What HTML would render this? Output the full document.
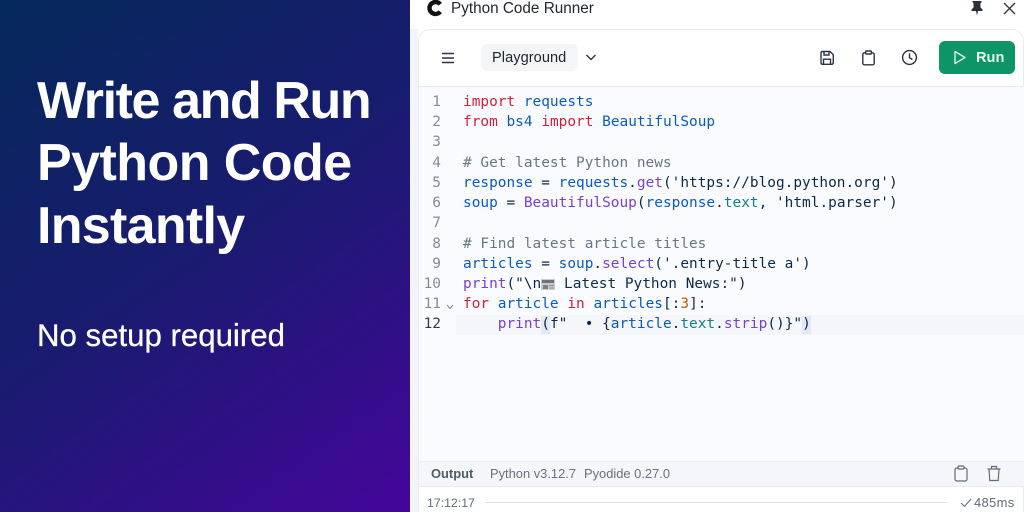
<!DOCTYPE html>
<html><head><meta charset="utf-8">
<style>
html,body{margin:0;padding:0;width:1024px;height:512px;overflow:hidden;background:#fff}
*{box-sizing:border-box}
#root{position:relative;width:1024px;height:512px;overflow:hidden}
.abs,.t,.c,.n{position:absolute;white-space:pre}
body{font-family:"Liberation Sans",sans-serif}
#left{position:absolute;left:0;top:0;width:410px;height:512px;background:linear-gradient(145deg,#04285a 0%,#1a1b70 50%,#44059b 100%)}
.h{position:absolute;left:37px;color:#fff;font-weight:700;font-size:52px;line-height:62px;letter-spacing:-.55px;white-space:pre}
.c{left:463px;font-family:"DejaVu Sans Mono",monospace;font-size:14.44px;line-height:20px;color:#0b2a4a}
.n{width:26px;left:415px;text-align:right;font-family:"DejaVu Sans Mono",monospace;font-size:14.44px;line-height:20px;color:#858b93}
.r{color:#d0203a}.b{color:#0a5ac2}.p{color:#7a3fd1}.te{color:#0f7f86}.o{color:#b5600b}
.f{font-size:12.9px;line-height:16px;color:#667280}
</style></head><body><div id="root">
<div id="left"></div>
<div class="h" style="top:70px;letter-spacing:-1.4px">Write and Run</div>
<div class="h" style="top:132px">Python Code</div>
<div class="h" style="top:195px;letter-spacing:-.7px">Instantly</div>
<div class="t" style="left:37px;top:318px;color:#fff;font-size:31.2px;line-height:36px;-webkit-text-stroke:.3px #fff">No setup required</div>

<div class="abs" style="left:410px;top:0;width:8px;height:512px;background:#f3f4f8"></div>
<div class="abs" style="left:410px;top:0;width:614px;height:29px;background:#fff"></div>
<svg class="abs" style="left:426px;top:0" width="17" height="17" viewBox="0 0 17 17"><path d="M14.2 4.300A6 6 0 1 0 14.200 11.700" fill="none" stroke="#111" stroke-width="4.400"/></svg>
<div class="t" style="left:451px;top:0;font-size:15.3px;line-height:18px;color:#23272e">Python Code Runner</div>
<svg class="abs" style="left:970px;top:0" width="14" height="16" viewBox="0 0 14 16"><path d="M2.500 1H11.500V2.500L10.500 3V7.500L12.500 9.500V11H1.500V9.500L3.500 7.500V3L2.500 2.500Z M6 11H8L7 15.500Z" fill="#2b3038"/></svg>
<svg class="abs" style="left:1003px;top:2px" width="13" height="13" viewBox="0 0 13 13"><path d="M1 1L12 12M12 1L1 12" stroke="#353a42" stroke-width="1.400" fill="none"/></svg>

<div class="abs" style="left:418px;top:29px;width:606px;height:490px;background:#fff;border:1px solid #e9ecf3;border-bottom:0;border-radius:12px 12px 0 0"></div>
<div class="abs" style="left:419px;top:86px;width:605px;height:1px;background:#e8ebf3"></div>
<svg class="abs" style="left:441px;top:51px" width="14" height="14" viewBox="0 0 14 14"><path d="M1 2.500H13M1 7H13M1 11.500H13" stroke="#2b3442" stroke-width="1.400" fill="none"/></svg>
<div class="abs" style="left:481px;top:44px;width:97px;height:27px;background:#f4f5f7;border-radius:6px"></div>
<div class="t" style="left:492px;top:49px;font-size:14.6px;line-height:19px;color:#20262e;letter-spacing:.05px">Playground</div>
<svg class="abs" style="left:585px;top:53px" width="12" height="9" viewBox="0 0 12 9"><path d="M1.500 2L6 6.500L10.500 2" stroke="#2b3442" stroke-width="1.400" fill="none"/></svg>

<svg class="abs" style="left:819px;top:50px" width="16" height="16" viewBox="0 0 16 16" fill="none" stroke="#2a3446" stroke-width="1.400"><path d="M2 3.200Q2 1.500 3.700 1.500H11L14.300 4.800V12.500Q14.300 14.300 12.500 14.300H3.700Q2 14.300 2 12.500Z"/><path d="M5 1.700V5H10V1.700M4.500 14.200V9.200H11.500V14.200"/></svg>
<svg class="abs" style="left:861px;top:50px" width="15" height="16" viewBox="0 0 15 16" fill="none" stroke="#2a3446" stroke-width="1.400"><rect x="1.800" y="2.800" width="11.400" height="12" rx="1.600"/><rect x="4.600" y="1" width="5.800" height="3" rx=".8" fill="#fff"/></svg>
<svg class="abs" style="left:901px;top:49px" width="17" height="17" viewBox="0 0 17 17" fill="none" stroke="#2a3446" stroke-width="1.400"><circle cx="8.500" cy="8.500" r="6.900"/><path d="M8.500 4.300V8.700L11.500 10.500"/></svg>
<div class="abs" style="left:939px;top:41px;width:76px;height:33px;background:#0d9467;border-radius:6px"></div>
<svg class="abs" style="left:953px;top:50px" width="14" height="15" viewBox="0 0 14 15"><path d="M2 1.500L12 7.500L2 13.500Z" stroke="#d8f3e8" stroke-width="1.400" stroke-linejoin="round" fill="none"/></svg>
<div class="t" style="left:976px;top:49px;font-size:14.6px;line-height:19px;font-weight:700;color:#e6f7f0">Run</div>

<div class="abs" style="left:419px;top:87px;width:605px;height:374px;background:#fafbfe"></div>
<div class="abs" style="left:456px;top:315px;width:568px;height:20px;background:#f5f6f9"></div>
<div class="abs" style="left:541px;top:316px;width:9px;height:18px;background:#e2e8f6"></div>
<div class="abs" style="left:802px;top:316px;width:9px;height:18px;background:#e2e8f6"></div>

<div class="n" style="top:92px">1</div><div class="n" style="top:112px">2</div><div class="n" style="top:132px">3</div><div class="n" style="top:153px">4</div><div class="n" style="top:173px">5</div><div class="n" style="top:193px">6</div><div class="n" style="top:213px">7</div><div class="n" style="top:234px">8</div><div class="n" style="top:254px">9</div><div class="n" style="top:274px">10</div><div class="n" style="top:294px">11</div><div class="n" style="top:314px;color:#333a42">12</div>
<svg class="abs" style="left:446px;top:304px" width="8" height="6" viewBox="0 0 8 6"><path d="M1 1L4 4.500L7 1" stroke="#7d848c" stroke-width="1" fill="none"/></svg>

<div class="c" style="top:92px"><span class="r">import</span> <span class="b">requests</span></div>
<div class="c" style="top:112px"><span class="r">from</span> <span class="b">bs4</span> <span class="r">import</span> <span class="b">BeautifulSoup</span></div>
<div class="c" style="top:153px;color:#6a7684"># Get latest Python news</div>
<div class="c" style="top:173px"><span class="b">response</span> = <span class="b">requests</span>.<span class="p">get</span>('https://blog.python.org')</div>
<div class="c" style="top:193px"><span class="b">soup</span> = <span class="p">BeautifulSoup</span>(<span class="b">response</span>.<span class="te">text</span>, 'html.parser')</div>
<div class="c" style="top:234px;color:#6a7684"># Find latest article titles</div>
<div class="c" style="top:254px"><span class="b">articles</span> = <span class="b">soup</span>.<span class="p">select</span>('.entry-title a')</div>
<div class="c" style="top:274px"><span class="p">print</span>("\n</div>
<svg class="abs" style="left:541px;top:278px" width="15" height="13" viewBox="0 0 15 13"><rect x="0" y="1" width="14" height="11" fill="#c9cbce"/><rect x="1" y="2" width="12" height="3" fill="#6f7378"/><rect x="2" y="7" width="5" height="4" fill="#7c8086"/><rect x="8" y="7" width="5" height="1" fill="#85898e"/><rect x="8" y="9.500" width="5" height="1" fill="#85898e"/></svg>
<div class="c" style="top:274px;left:564px">Latest Python News:")</div>
<div class="c" style="top:294px"><span class="r">for</span> <span class="b">article</span> <span class="r">in</span> <span class="b">articles</span>[:<span class="o">3</span>]:</div>
<div class="c" style="top:314px">    <span class="p">print</span>(f"  • {<span class="b">article</span>.<span class="te">text</span>.<span class="p">strip</span>()}")</div>

<div class="abs" style="left:419px;top:461px;width:605px;height:26px;background:#f5f6f9;border-top:1px solid #eceef3;border-bottom:1px solid #e8ebf2"></div>
<div class="t f" style="left:431px;top:466px;font-weight:700;color:#4f5b68">Output</div>
<div class="t f" style="left:490px;top:466px">Python v3.12.7</div>
<div class="t f" style="left:584px;top:466px">Pyodide 0.27.0</div>
<svg class="abs" style="left:953px;top:465px" width="16" height="17" viewBox="0 0 16 17" fill="none" stroke="#5f6b79" stroke-width="1.200"><rect x="2" y="3" width="12" height="13" rx="2"/><rect x="5" y="1" width="6" height="3" rx="1" fill="#f5f6f9"/></svg>
<svg class="abs" style="left:986px;top:465px" width="16" height="17" viewBox="0 0 16 17" fill="none" stroke="#5f6b79" stroke-width="1.200"><path d="M1.500 4H14.500M5.500 4V1.500H10.500V4M3 4L3.800 15.500H12.200L13 4"/></svg>
<div class="t f" style="left:427px;top:495px;font-size:12.3px;color:#5f6b79">17:12:17</div>
<div class="abs" style="left:485px;top:502px;width:462px;height:1px;background:#dfe6f1"></div>
<svg class="abs" style="left:960px;top:498px" width="12" height="10" viewBox="0 0 12 10"><path d="M1 5L4.500 8.500L11 1" stroke="#5f6b79" stroke-width="1.100" fill="none"/></svg>
<div class="t f" style="left:974px;top:495px;font-size:13px;letter-spacing:.3px;color:#5f6b79">485ms</div>
</div></body></html>
